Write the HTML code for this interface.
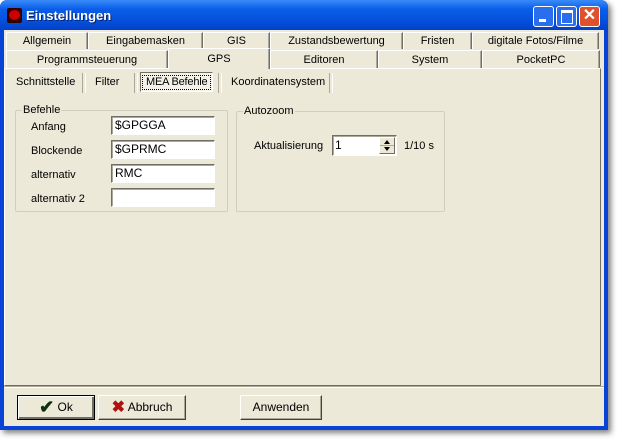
<!DOCTYPE html><html><head><style>
body{margin:0;width:618px;height:440px;background:#fff;position:relative;overflow:hidden;font-family:"Liberation Sans",sans-serif;font-size:11px;color:#000}
.a{position:absolute;white-space:nowrap}
.win{left:0;top:0;width:608px;height:430px;background:#0842d6;border-radius:7px 7px 0 0;box-shadow:3px 3px 6px rgba(0,0,0,.5)}
.title{left:0;top:0;width:608px;height:30px;border-radius:7px 7px 0 0;background:linear-gradient(#3a8cf8,#0a5ee8 30%,#0550dc 70%,#0340c8)}
.body{left:4px;top:30px;width:600px;height:396px;background:#ece9d8}
.tab{position:absolute;height:17px;border:1px solid #fff;border-right:1px solid #716f64;border-bottom:none;box-shadow:inset -1px 0 #aca899;text-align:center;line-height:16px;background:#ece9d8;box-sizing:border-box;white-space:nowrap}
.in{position:absolute;background:#fff;border:1px solid;border-color:#716f64 #fff #fff #716f64;box-shadow:inset 1px 1px #aca899;height:19px;box-sizing:border-box;padding:1px 3px;font-size:12px}
.grp{position:absolute;border:1px solid #d0d0bf;border-radius:2px}
.gl{position:absolute;top:-7px;background:#ece9d8;padding:0 1px}
.btn{position:absolute;top:395px;height:25px;border:1px solid;border-color:#fff #404040 #404040 #fff;box-sizing:border-box;box-shadow:inset -1px -1px #aca899;text-align:center;line-height:22px;font-size:12px}
.sep{position:absolute;width:2px;height:20px;border-left:1px solid #aca899;border-right:1px solid #fff;top:73px}
</style></head><body>
<div class="a win"></div>
<div class="a title"></div>
<div class="a" style="left:7px;top:8px;width:15px;height:15px;background:#300;border-radius:2px"><div style="margin:2px;width:11px;height:10px;background:#c00;border-radius:50%"></div></div>
<div class="a" style="left:26px;top:8px;color:#fff;font-weight:bold;font-size:13px;text-shadow:1px 1px #0a246a">Einstellungen</div>
<div class="a" style="left:533px;top:6px;width:21px;height:21px;border:1px solid #fff;border-radius:3px;background:#2a6ef0;box-sizing:border-box"><div style="position:absolute;left:5px;top:12px;width:7px;height:3px;background:#fff"></div></div>
<div class="a" style="left:556px;top:6px;width:21px;height:21px;border:1px solid #fff;border-radius:3px;background:#2a6ef0;box-sizing:border-box"><div style="position:absolute;left:4px;top:3px;width:10px;height:10px;border:1px solid #fff;border-top-width:3px"></div></div>
<div class="a" style="left:579px;top:6px;width:21px;height:21px;border:1px solid #fff;border-radius:3px;background:#e0502a;box-sizing:border-box;color:#fff;font-weight:bold;font-size:16px;text-align:center;line-height:18px">✕</div>
<div class="a body"></div>
<div class="a" style="left:4px;top:68px;width:597px;height:318px;border-top:1px solid #fff;border-left:1px solid #fff;border-right:1px solid #716f64;border-bottom:1px solid #716f64;box-sizing:border-box"></div>
<div class="tab" style="left:6px;top:32px;width:82px">Allgemein</div>
<div class="tab" style="left:88px;top:32px;width:115px">Eingabemasken</div>
<div class="tab" style="left:203px;top:32px;width:67px">GIS</div>
<div class="tab" style="left:270px;top:32px;width:133px">Zustandsbewertung</div>
<div class="tab" style="left:403px;top:32px;width:69px">Fristen</div>
<div class="tab" style="left:472px;top:32px;width:127px">digitale Fotos/Filme</div>
<div class="tab" style="left:6px;top:50px;width:162px;height:18px;line-height:18px">Programmsteuerung</div>
<div class="tab" style="left:168px;top:48px;width:102px;height:21px;line-height:20px;border-bottom:none;z-index:2">GPS</div>
<div class="tab" style="left:270px;top:50px;width:108px;height:18px;line-height:18px">Editoren</div>
<div class="tab" style="left:378px;top:50px;width:104px;height:18px;line-height:18px">System</div>
<div class="tab" style="left:482px;top:50px;width:118px;height:18px;line-height:18px">PocketPC</div>
<div class="a" style="left:16px;top:76px">Schnittstelle</div>
<div class="sep" style="left:82px"></div>
<div class="a" style="left:95px;top:76px">Filter</div>
<div class="sep" style="left:134px"></div>
<div class="a" style="left:140px;top:72px;width:73px;height:20px;border:1px solid;border-color:#716f64 #fff #fff #716f64;box-sizing:border-box;background:#f4f2e8"><div style="margin:2px 1px;border:1px dotted #000;line-height:13px;padding-left:3px;letter-spacing:-0.2px">MEA Befehle</div></div>
<div class="sep" style="left:218px"></div>
<div class="a" style="left:231px;top:76px">Koordinatensystem</div>
<div class="sep" style="left:329px"></div>
<div class="grp" style="left:15px;top:110px;width:211px;height:100px"><span class="gl" style="left:6px">Befehle</span></div>
<div class="a" style="left:31px;top:121px">Anfang</div>
<div class="a" style="left:31px;top:145px">Blockende</div>
<div class="a" style="left:31px;top:169px">alternativ</div>
<div class="a" style="left:31px;top:193px">alternativ 2</div>
<div class="in" style="left:111px;top:116px;width:104px">$GPGGA</div>
<div class="in" style="left:111px;top:140px;width:104px">$GPRMC</div>
<div class="in" style="left:111px;top:164px;width:104px">RMC</div>
<div class="in" style="left:111px;top:188px;width:104px"></div>
<div class="grp" style="left:236px;top:111px;width:207px;height:99px"><span class="gl" style="left:6px">Autozoom</span></div>
<div class="a" style="left:254px;top:140px">Aktualisierung</div>
<div class="in" style="left:332px;top:135px;width:65px;height:21px;padding:2px">1</div>
<div class="a" style="left:379px;top:137px;width:16px;height:17px;background:#ece9d8;border:1px solid;border-color:#fff #716f64 #716f64 #fff;box-sizing:border-box">
<svg width="14" height="15" style="position:absolute;left:0;top:0"><path d="M4 6 L10 6 L7 2Z M4 9 L10 9 L7 13Z" fill="#000"/><line x1="0" y1="7.5" x2="14" y2="7.5" stroke="#aca899"/></svg></div>
<div class="a" style="left:404px;top:140px">1/10 s</div>
<div class="a" style="left:4px;top:386px;width:600px;border-top:1px solid #aca899;border-bottom:1px solid #fff"></div>
<div class="btn" style="left:17px;width:78px;border-color:#000;box-shadow:inset 1px 1px #fff,inset -2px -2px #716f64"><span style="color:#103010;font-size:18px;font-weight:bold;vertical-align:-2px">✔</span> Ok</div>
<div class="btn" style="left:98px;width:88px"><span style="color:#b01010;font-size:16px;font-weight:bold;vertical-align:-1px">✖</span> Abbruch</div>
<div class="btn" style="left:240px;width:82px">Anwenden</div>
</body></html>
